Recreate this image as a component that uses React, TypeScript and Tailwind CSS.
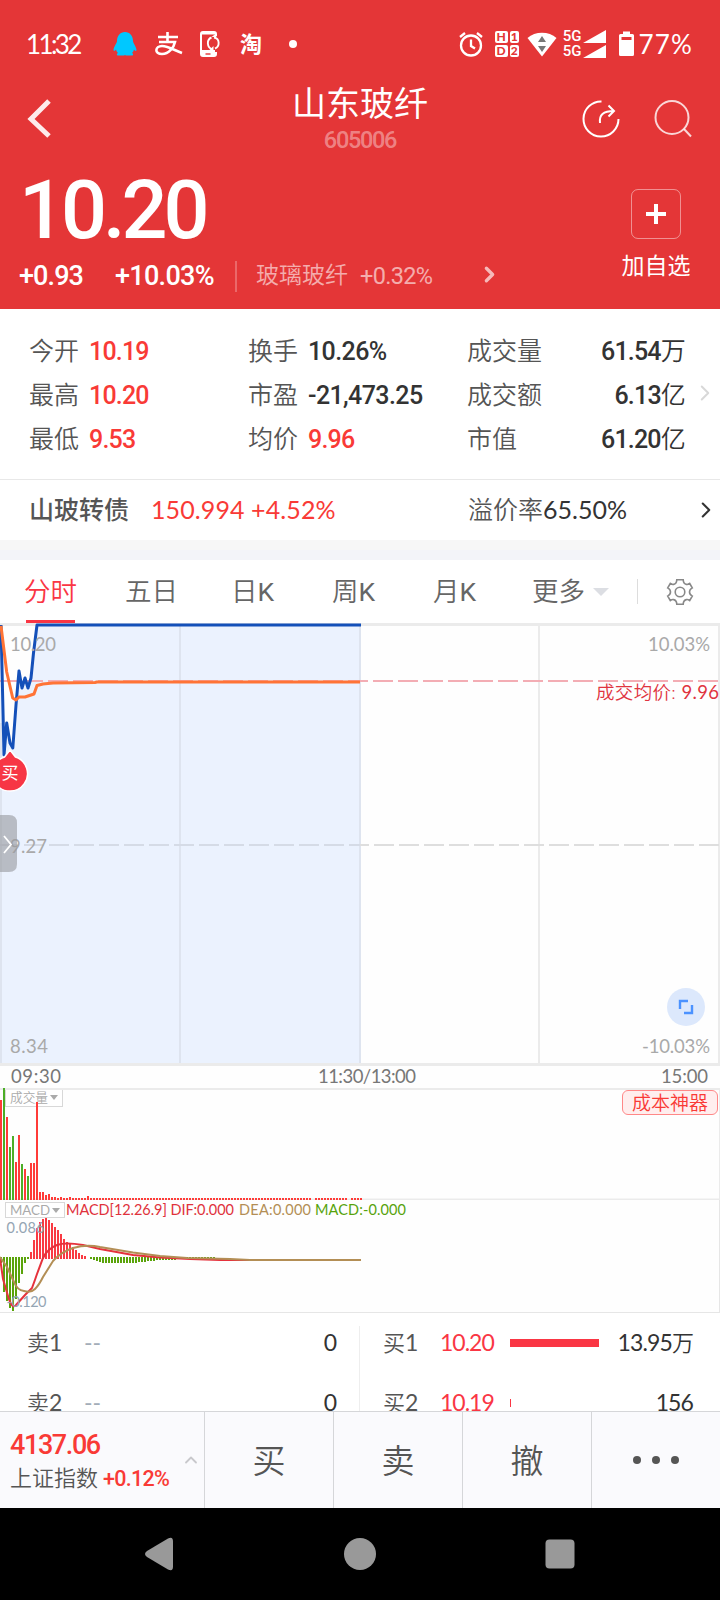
import type { ReactNode } from "react";
import { ChevronRight, ChevronUp } from "lucide-react";
import { clsx } from "clsx";

interface Stat {
  label: string;
  value: string;
  unit?: string;
  up?: boolean;
}

const statColumns: Stat[][] = [
  [
    { label: "今开", value: "10.19", up: true },
    { label: "最高", value: "10.20", up: true },
    { label: "最低", value: "9.53", up: true },
  ],
  [
    { label: "换手", value: "10.26%" },
    { label: "市盈", value: "-21,473.25" },
    { label: "均价", value: "9.96", up: true },
  ],
  [
    { label: "成交量", value: "61.54", unit: "万" },
    { label: "成交额", value: "6.13", unit: "亿" },
    { label: "市值", value: "61.20", unit: "亿" },
  ],
];

// tops of the first volume bars, the rest of the session is flat
const volumeTops = [
  12, 0, 29, 59, 48, 74, 47, 76, 81, 88, 75, 75, 14, 104, 104, 107, 106, 109, 109, 110, 109, 110, 110, 109, 110, 110,
  110, 110, 110, 108,
];
const volumeDown = [1, 3, 4, 7, 9];
const volumeGaps = [104, 116];

const macdBars = [
  -6, -35, -44, -51, -54, -42, -26, -17, -6, -2, 7, 19, 31, 37, 40, 41, 39, 36, 32, 29, 25, 20, 17, 15, 12, 9, 6, 4, 3,
  0, -2, -3, -4, -5, -6, -6, -6, -6, -6, -6, -6, -6, -6, -6, -6, -6, -5, -5, -5, -4, -4, -4, -3, -3, -3, -3, -3, -3,
  -3, -2,
];

function StatusBar() {
  return (
    <div className="flex h-[86px] items-center pl-[26px] pr-[27px] pt-[2px] text-white">
      <span className="w-[87px] text-[26px] tracking-[-2.6px]">11:32</span>
      <svg className="h-[26px] w-[24px]" viewBox="0 0 24 26">
        <path
          fill="#00c8ff"
          d="M12 1c-5 0-8 4-8 9 0 2-3 5-3.500 9 .3 2 1.800.5 2.500-.4.4 1.600 1 2.500 2 3.400-1.300.5-1.600 2-.4 2.500h6.400l1-.6 1 .6h6.400c1.200-.5.9-2-.4-2.500 1-.9 1.600-1.800 2-3.400.7.9 2.200 2.400 2.500.4C23 15 20 12 20 10c0-5-3-9-8-9z"
        />
      </svg>
      <svg className="ml-[16px] h-[30px] w-[30px]" viewBox="0 0 30 30">
        <g fill="none" stroke="#fff" strokeWidth="2.600">
          <path d="M5 8h20M14.500 3v10M6 13h16c-1 5-6 12-13 12-8 0-7-8 0-8 6 0 12 4 20 7" />
        </g>
      </svg>
      <svg className="ml-[16px] h-[28px] w-[22px]" viewBox="0 0 22 28">
        <path d="M17 6V4a2 2 0 0 0-2-2H4a2 2 0 0 0-2 2v20a2 2 0 0 0 2 2h11a2 2 0 0 0 2-2v-2" fill="none" stroke="#fff" strokeWidth="2" />
        <path d="M3 20h13v5H3zM3 2h13v2.500H3z" fill="#fff" />
        <path d="M6.500 24h5" stroke="#e43637" strokeWidth="1.400" />
        <path d="M12.500 7.500c-5 2-5 10 1 12M16 18.500c5-2 5-10-1-11" fill="none" stroke="#fff" strokeWidth="1.900" />
        <path d="M10.500 20h4v-4zM17.500 7h-5l4-3z" fill="#fff" />
      </svg>
      <span className="ml-[19px] text-[22px] font-bold leading-none">淘</span>
      <span className="ml-[27px] h-2 w-2 rounded-full bg-white" />

      <div className="ml-auto flex items-center">
        <svg className="h-[26px] w-[24px]" viewBox="0 0 24 26" fill="none" stroke="#fff" strokeWidth="2.300">
          <circle cx="12" cy="14.500" r="10" />
          <path d="M12 8.500v6.500l4 2.500M1 6l5-4M23 6l-5-4" />
        </svg>
        <div className="ml-[12px] grid grid-cols-[13px_9px] gap-[2px] text-center text-[12px] font-black leading-[12px] text-[#e43637]">
          <span className="h-[12px] rounded-[2px] bg-white">H</span>
          <span className="h-[12px] rounded-[2px] bg-white">1</span>
          <span className="h-[12px] rounded-[2px] bg-white">D</span>
          <span className="h-[12px] rounded-[2px] bg-white">2</span>
        </div>
        <svg className="ml-[8px] h-[26px] w-[30px]" viewBox="0 0 30 26">
          <path d="M15 25.500.5 7C8 0 22 0 29.500 7z" fill="#fff" />
          <path d="M11 11h8l-4-6zM11 15h8l-4 6z" fill="#777" />
        </svg>
        <div className="ml-[6px] font-['Roboto'] text-[15px] font-medium leading-[15px]">
          <div>5G</div>
          <div>5G</div>
        </div>
        <svg className="ml-[2px] h-[28px] w-[23px]" viewBox="0 0 23 28" fill="#fff">
          <path d="M23 0v13H0zM23 15v13H0z" />
        </svg>
        <svg className="ml-[13px] h-[26px] w-[15px]" viewBox="0 0 15 26">
          <path d="M1.500 3H4V.5h7V3h2.500q1.500 0 1.500 1.500v19q0 1.500-1.500 1.500h-12Q0 25 0 23.500v-19Q0 3 1.500 3z" fill="#fff" />
          <path d="M2.500 6h10v3h-10z" fill="#e43637" />
        </svg>
        <span className="ml-1 text-[26px] tracking-[1.200px]">77%</span>
      </div>
    </div>
  );
}

function QuoteHeader() {
  return (
    <header className="h-[309px] bg-[#e43637] text-white">
      <StatusBar />
      <div className="flex h-[74px] items-start justify-between pl-[27px] pr-[27px]">
        <svg className="mt-[13px] h-[40px] w-[120px]" viewBox="0 0 120 40" fill="none" stroke="#fff" strokeOpacity=".9" strokeWidth="5">
          <path d="M22 2 4 20l18 17" />
        </svg>
        <div className="-mt-[2px] flex flex-col items-center">
          <h1 className="text-[34px] leading-[38px]">山东玻纤</h1>
          <span className="mt-[6px] font-['Roboto'] text-[23.5px] font-medium leading-[24px] tracking-[-1.3px] text-white/40">605006</span>
        </div>
        <svg className="mt-[12px] h-[42px] w-[120px]" viewBox="0 0 120 42" fill="none" stroke="#fff" strokeWidth="2">
          <path d="M28.500 3.500a17.500 17.500 0 1 0 17 17.500" />
          <path d="M27 25c-1-8 3-12 14-12M35.500 7.500l5.500 5.500-5.500 5.500" />
          <circle cx="99" cy="19.500" r="16.500" strokeOpacity=".8" />
          <path d="m111 31 7 7.500" strokeOpacity=".8" />
        </svg>
      </div>
      <div className="flex justify-between pl-[19px] pr-[29px]">
        <div>
          <div className="h-[97px] font-['Roboto'] text-[81px] font-medium leading-[101px] tracking-[-4px]">10.20</div>
          <div className="flex h-[38px] items-center font-['Roboto','Noto_Sans_CJK_SC',sans-serif]">
            <span className="w-[96px] text-[27px] font-medium tracking-[-0.9px]">+0.93</span>
            <span className="w-[120px] text-[27px] font-medium tracking-[-0.7px]">+10.03%</span>
            <span className="h-[31px] w-[2px] bg-white/25" />
            <span className="ml-[19px] w-[104px] text-[23px] font-[350] text-white/60">玻璃玻纤</span>
            <span className="w-[117px] pt-[1px] text-[23.500px] tracking-[-0.7px] text-white/60">+0.32%</span>
            <ChevronRight className="-mt-[3px] h-[25px] w-[25px] text-white/65" strokeWidth={3.2} />
          </div>
        </div>
        <div className="flex w-[70px] flex-col items-center pt-[29px]">
          <div className="flex h-[50px] w-[50px] items-center justify-center rounded-[7px] border border-white/45">
            <svg className="h-5 w-5" viewBox="0 0 20 20" stroke="#fff" strokeWidth="4">
              <path d="M0 10h20M10 0v20" />
            </svg>
          </div>
          <span className="mt-[9px] whitespace-nowrap text-[23px] leading-[34px]">加自选</span>
        </div>
      </div>
    </header>
  );
}

function StatsPanel() {
  return (
    <section className="flex h-[171px] border-b border-[#e8e8e8] bg-white pl-[29px] pt-[21px]">
      {statColumns.map((column, index) => (
        <div key={index} className={clsx(index < 2 ? "w-[219px]" : "w-[218px]")}>
          {column.map((stat) => (
            <div key={stat.label} className="flex h-[44px] items-center font-['Roboto','Noto_Sans_CJK_SC',sans-serif] text-[25px]">
              <span className={clsx("font-[350] text-[#555]", index < 2 && "w-[60px]")}>{stat.label}</span>
              <span
                className={clsx(
                  "font-medium tracking-[-0.8px]",
                  stat.up ? "text-[#f93a36]" : "text-[#333]",
                  index === 1 && !stat.up && "tracking-[-0.600px]",
                  index === 2 && "ml-auto",
                )}
              >
                {stat.value}
                {stat.unit && <span className="font-[350]">{stat.unit}</span>}
              </span>
            </div>
          ))}
        </div>
      ))}
      <ChevronRight className="ml-[7px] mt-[50px] h-[26px] w-[26px] text-[#d8d8d8]" strokeWidth={1.8} />
    </section>
  );
}

function BondRow() {
  return (
    <section className="flex h-[60px] items-center bg-white pl-[29px] pr-[1px] text-[25px]">
      <span className="w-[122px] font-medium text-[#555]">山玻转债</span>
      <span className="w-[317px] tracking-[0.1px] text-[#f93a36]">150.994 +4.52%</span>
      <span className="font-[350] text-[#555]">溢价率</span>
      <span className="text-[#333]">65.50%</span>
      <ChevronRight className="ml-auto h-[26px] w-[26px] text-[#333]" strokeWidth={1.9} />
    </section>
  );
}

function Tab({ children, active }: { children: ReactNode; active?: boolean }) {
  return (
    <div className={clsx("relative flex h-[63px] w-[101px] items-center justify-center pt-[1px]", active ? "text-[#fa3644]" : "text-[#666]")}>
      {children}
      {active && <span className="absolute bottom-0 left-[26px] h-[3px] w-[49px] bg-[#fa3644]" />}
    </div>
  );
}

function ChartTabs() {
  return (
    <nav className="flex h-[63px] items-center bg-white font-['Roboto','Noto_Sans_CJK_SC',sans-serif] text-[26.500px] font-[350]">
      <Tab active>分时</Tab>
      <Tab>五日</Tab>
      <Tab>
        日<span className="font-normal">K</span>
      </Tab>
      <Tab>
        周<span className="font-normal">K</span>
      </Tab>
      <Tab>
        月<span className="font-normal">K</span>
      </Tab>
      <div className="flex w-[132px] items-center pl-[27px] pt-[1px] text-[#666]">
        更多
        <span className="ml-[8px] border-x-[8px] border-t-[8px] border-x-transparent border-t-[#dcdee3]" />
      </div>
      <span className="h-[25px] w-px bg-[#ddd]" />
      <svg className="ml-[28px] h-[28px] w-[28px]" viewBox="0 0 28 28" fill="none" stroke="#888" strokeWidth="1.600">
        <circle cx="14" cy="14" r="4.800" />
        <path d="M10.800 1.800h6.400q.2 4 3.200 4.600 1.500.3 3.300-.9l2.600 4.400q-2.800 1.600-2.800 4.100t2.800 4.100l-2.600 4.400q-1.800-1.200-3.300-.9-3 .6-3.200 4.600h-6.400q-.2-4-3.200-4.600-1.500-.3-3.300.9l-2.600-4.400q2.800-1.600 2.800-4.100T1.700 9.900l2.600-4.400q1.800 1.200 3.300.9 3-.6 3.200-4.600z" />
      </svg>
    </nav>
  );
}

function PriceChart() {
  const price = "1,2 4,132 6.7,100 10,120 12.8,125 16,82 19,48 22,65 25,55 28,65 31,55 33.5,30 37,2";
  const average =
    "1,3 6.7,49 12.7,75 16,77 19,74 25,74 34,71 37,62.500 43,61 53,60 95,59.500 97,59 360,59";
  return (
    <svg className="block" width="720" height="465" viewBox="0 0 720 465">
      <g stroke="#ebebeb" fill="none">
        <path d="M0 1.500h720M0 441.500h720" strokeWidth="3" />
        <path d="M1 0v441M719 0v441M180 0v441M360 0v441M539 0v441" strokeWidth="2" />
      </g>
      <polygon points={`0,440 0,2 ${price} 360,2 360,440`} fill="#ebf2fe" />
      <path d="M1 100v340M180 3v437M360 3v437" stroke="#dee4ef" strokeWidth="2" />
      <path d="M-1 222h361" stroke="#d5dbe6" strokeWidth="2" strokeDasharray="20 5" />
      <path d="M374 222h346" stroke="#dedede" strokeWidth="2" strokeDasharray="20 5" />
      <path d="M360 222h9" stroke="#dedede" strokeWidth="2" />
      <path d="M-2 58h722" stroke="#f3adb4" strokeWidth="2" strokeDasharray="20 5" />
      <polyline points={`${price} 361,2`} fill="none" stroke="#1450b9" strokeWidth="3" strokeLinejoin="round" />
      <polyline points={average} fill="none" stroke="#ff7436" strokeWidth="3" strokeLinejoin="round" />

      <g fill="#a9a9a9" fontSize="18.500">
        <text x="10" y="28" textLength="46">10.20</text>
        <text x="10" y="230" textLength="37">9.27</text>
        <text x="10" y="430" textLength="38">8.34</text>
        <text x="648" y="28" textLength="62">10.03%</text>
        <text x="642" y="430" textLength="68">-10.03%</text>
      </g>
      <g fill="#777" fontSize="18.500">
        <text x="11" y="460" textLength="50">09:30</text>
        <text x="318" y="460" textLength="98">11:30/13:00</text>
        <text x="661" y="460" textLength="47">15:00</text>
      </g>
      <text x="596" y="76" textLength="123" fontSize="18.500" fill="#e0343f" className="font-[350]">
        成交均价: <tspan className="font-normal">9.96</tspan>
      </text>

      <path d="m10 127 5.500 7a17.500 17.500 0 1 1-11 0z" fill="#f73645" stroke="#fff" strokeWidth="1.500" />
      <text x="1.500" y="156" fontSize="17" fill="#fff">
        买
      </text>

      <path d="M0 192h9q8 0 8 8v41q0 8-8 8H0z" fill="#9a9ba0" fillOpacity=".62" />
      <path d="m4 213 7 8.500-7 8.500" fill="none" stroke="#fff" strokeWidth="1.800" />

      <circle cx="686" cy="384" r="19" fill="#dce8fc" />
      <path d="M688 378h-8v8M684 390h8v-8" fill="none" stroke="#4b92ff" strokeWidth="2.400" />
    </svg>
  );
}

function IndicatorBadge({ children }: { children: ReactNode }) {
  return (
    <span className="absolute left-[5px] flex items-center gap-[1px] border border-[#d8d8d8] bg-white/60 px-1 leading-none text-[#aaa]">
      {children}
      <span className="border-x-[4px] border-t-[5px] border-x-transparent border-t-[#aaa]" />
    </span>
  );
}

function VolumeChart() {
  const bars = Array.from({ length: 121 }, (_, i) => i).filter((i) => !volumeGaps.includes(i));
  return (
    <div className="relative h-[112px]">
      <IndicatorBadge>
        <span className="w-[39px] py-[1px] text-[12.700px] font-[350] leading-[15px]">成交量</span>
      </IndicatorBadge>
      <svg className="relative block" width="720" height="112" viewBox="0 0 720 112">
        <path d="M0 1h720M0 111.500h720" stroke="#ebebeb" strokeWidth="2" />
        <path d="M719.500 0v112" stroke="#ebebeb" />
        {bars.map((i) => {
          const top = volumeTops[i] ?? 110;
          return <rect key={i} x={i * 3} y={top} width="2" height={112 - top} fill={volumeDown.includes(i) ? "#4cae27" : "#ff3b38"} />;
        })}
      </svg>
      <span className="absolute right-[2px] top-[2px] flex h-[25px] w-[96px] items-center justify-center rounded-[6px] border border-[#f88] bg-[#ffeeee] text-[19px] font-[350] leading-none text-[#f93a36]">
        成本神器
      </span>
    </div>
  );
}

function MacdChart() {
  return (
    <div className="relative h-[113px] pt-[2px]">
      <IndicatorBadge>
        <span className="w-[41px] text-[13.300px] leading-[14px]">MACD</span>
      </IndicatorBadge>
      <svg className="relative -mt-[2px] block" width="720" height="113" viewBox="0 0 720 113">
        <path d="M0 112.500h720M719.500 0v112" stroke="#e6e6e6" />
        {macdBars.map((value, i) => (
          <rect
            key={i}
            x={i * 3}
            y={value > 0 ? 59 - value : 57}
            width="2"
            height={Math.abs(value)}
            fill={value > 0 ? "#f93a42" : "#5aa30a"}
          />
        ))}
        <path d="M180 58h36" stroke="#5aa30a" strokeWidth="2" strokeDasharray="2 1" />
        <path
          d="M0 58 3 79 8 96Q12 110 16 105L25 95 32 88Q35 80 37 74L43 58Q47 49 57 45 65 42 83 45L100 49 133 55 160 57.500 190 59 220 60 361 60"
          fill="none"
          stroke="#e5323c"
          strokeWidth="2"
        />
        <path
          d="M0 57 7 67 14 82Q17 90 24 91 31 93 35 89 39 85 43 77L53 61Q61 52 73 48 87 44 100 47L133 52.500 160 56 187 58 230 59 250 60 361 60"
          fill="none"
          stroke="#b38e55"
          strokeWidth="2"
        />
        <g fontSize="14.500">
          <text x="66" y="15" fill="#e0323c" textLength="168">MACD[12.26.9] DIF:0.000</text>
          <text x="239" y="15" fill="#b38e55" textLength="72">DEA:0.000</text>
          <text x="315" y="15" fill="#57a30b" textLength="91">MACD:-0.000</text>
          <text x="6.500" y="33" fill="#94a5b3" textLength="38">0.086</text>
          <text x="6.500" y="107" fill="#94a5b3" textLength="40">-0.120</text>
        </g>
      </svg>
    </div>
  );
}

function OrderBook() {
  return (
    <section className="flex h-[98px] overflow-hidden bg-white text-[23px] text-[#333]">
      <div className="flex-1">
        {["1", "2"].map((level) => (
          <div key={level} className="flex h-[60px] items-center pb-[1px] pl-[27px] pr-[22px]">
            <span className="w-[57px] text-[#555]">
              <span className="text-[22px] font-[350]">卖</span>
              {level}
            </span>
            <span className="text-[#a3adb8]">--</span>
            <span className="ml-auto">0</span>
          </div>
        ))}
      </div>
      <div className="mt-[13px] w-px bg-[#eee]" />
      <div className="w-[360px]">
        {[
          { level: "1", price: "10.20", bar: 89, volume: "13.95", unit: "万" },
          { level: "2", price: "10.19", bar: 1, volume: "156", unit: "" },
        ].map((bid) => (
          <div key={bid.level} className="flex h-[60px] items-center pb-[1px] pl-[23px] pr-[27px]">
            <span className="w-[57px] text-[#555]">
              <span className="text-[22px] font-[350]">买</span>
              {bid.level}
            </span>
            <span className="w-[70px] tracking-[-1px] text-[#fa3644]">{bid.price}</span>
            <span className="mt-[1px] h-2 bg-[#fa3644]" style={{ width: bid.bar }} />
            <span className="ml-auto tracking-[-0.9px]">
              {bid.volume}
              <span className="text-[22px] font-[350]">{bid.unit}</span>
            </span>
          </div>
        ))}
      </div>
    </section>
  );
}

function TradeBar() {
  return (
    <footer className="flex h-[97px] border-t border-[#d5d6d9] bg-[#fafafd] text-[#555]">
      <div className="flex w-[204px] items-center justify-between pl-[10px] pr-[3px] font-['Roboto','Noto_Sans_CJK_SC',sans-serif]">
        <div className="pt-[3px]">
          <div className="text-[27px] font-medium leading-[34px] tracking-[-1.4px] text-[#f93a36]">4137.06</div>
          <div className="flex items-center whitespace-nowrap leading-[34px]">
            <span className="text-[22px] font-[350] text-[#555]">上证指数</span>
            <span className="ml-[5px] text-[21.500px] font-medium tracking-[-0.7px] text-[#f93a36]">+0.12%</span>
          </div>
        </div>
        <ChevronUp className="h-5 w-5 text-[#c8c8cc]" strokeWidth={2.2} />
      </div>
      {["买", "卖", "撤"].map((action) => (
        <button key={action} className="w-[129px] border-l border-[#d5d6d9] pt-[2px] text-[33px] font-[350]">
          {action}
        </button>
      ))}
      <button className="flex flex-1 items-center justify-center gap-[11px] border-l border-[#d5d6d9]">
        <span className="h-2 w-2 rounded-full bg-[#555]" />
        <span className="h-2 w-2 rounded-full bg-[#555]" />
        <span className="h-2 w-2 rounded-full bg-[#555]" />
      </button>
    </footer>
  );
}

function SystemNav() {
  return (
    <div className="h-[92px] bg-black">
      <svg width="720" height="92" viewBox="0 0 720 92" fill="#999">
        <path d="M147 43 168 30.500q5-2.500 5 3v25q0 5.500-5 3L147 49q-4-3 0-6z" />
        <circle cx="360" cy="46" r="16" />
        <rect x="545.500" y="31.500" width="29" height="29" rx="4" />
      </svg>
    </div>
  );
}

export default function App() {
  return (
    <div className="h-[1600px] w-[720px] overflow-hidden bg-[#fefefe] font-['Lato','Noto_Sans_CJK_SC',sans-serif]">
      <QuoteHeader />
      <StatsPanel />
      <BondRow />
      <div className="h-[10px] bg-[#f7f7f7]" />
      <div className="h-[10px] bg-[#f3f4f9]" />
      <ChartTabs />
      <PriceChart />
      <VolumeChart />
      <MacdChart />
      <OrderBook />
      <TradeBar />
      <SystemNav />
    </div>
  );
}
